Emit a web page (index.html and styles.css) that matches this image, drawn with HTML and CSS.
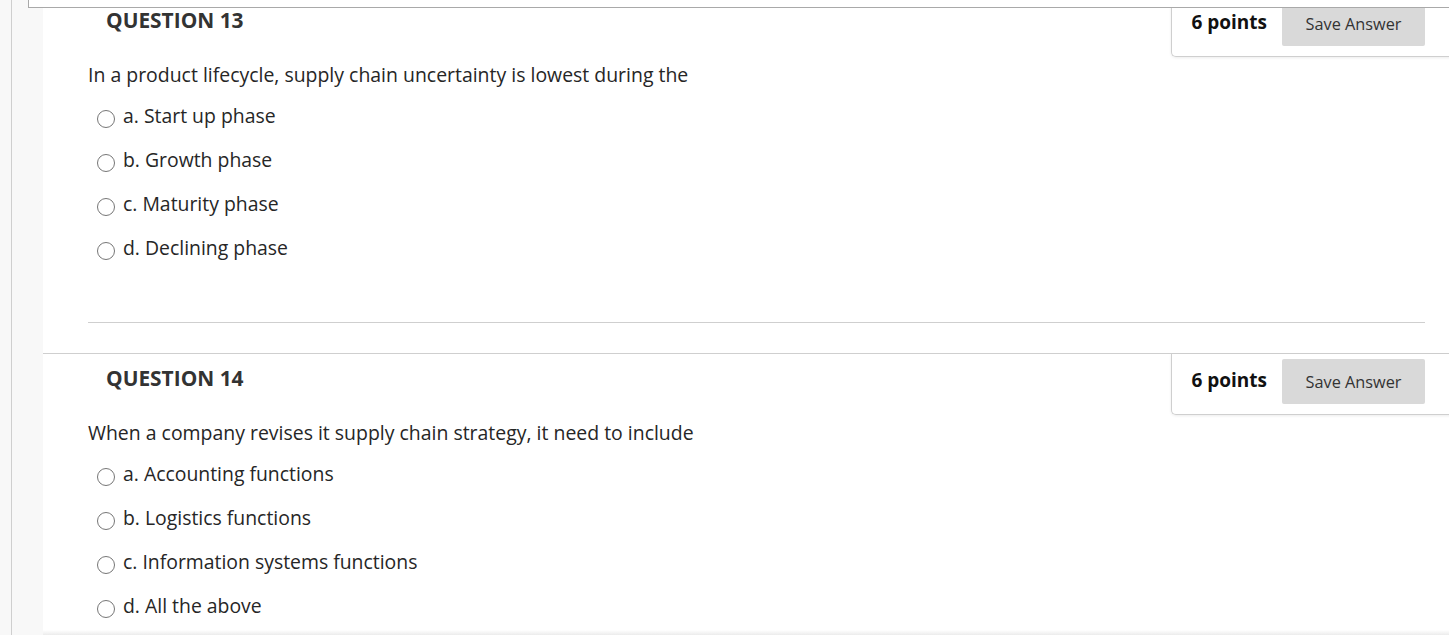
FILE: index.html
```html
<!DOCTYPE html>
<html lang="en">
<head>
<meta charset="utf-8">
<title>Quiz</title>
<link rel="stylesheet" href="styles.css">
</head>
<body>
<div class="page">
  <div class="rail"></div>
  <main class="content">
    <div class="topbar"></div>
    <section class="question first">
      <div class="q-head">
        <h2 class="q-title">QUESTION 13</h2>
        <div class="points-box">
          <span class="points">6 points</span>
          <button class="save">Save Answer</button>
        </div>
      </div>
      <p class="q-text">In a product lifecycle, supply chain uncertainty is lowest during the</p>
      <ul class="options">
        <li class="option"><span class="radio"></span><span class="label">a. Start up phase</span></li>
        <li class="option"><span class="radio"></span><span class="label">b. Growth phase</span></li>
        <li class="option"><span class="radio"></span><span class="label">c. Maturity phase</span></li>
        <li class="option"><span class="radio"></span><span class="label">d. Declining phase</span></li>
      </ul>
      <hr class="sep">
    </section>
    <section class="question">
      <div class="q-head">
        <h2 class="q-title">QUESTION 14</h2>
        <div class="points-box">
          <span class="points">6 points</span>
          <button class="save">Save Answer</button>
        </div>
      </div>
      <p class="q-text">When a company revises it supply chain strategy, it need to include</p>
      <ul class="options">
        <li class="option"><span class="radio"></span><span class="label">a. Accounting functions</span></li>
        <li class="option"><span class="radio"></span><span class="label">b. Logistics functions</span></li>
        <li class="option"><span class="radio"></span><span class="label">c. Information systems functions</span></li>
        <li class="option"><span class="radio"></span><span class="label">d. All the above</span></li>
      </ul>
    </section>
    <div class="bottom-shade"></div>
  </main>
</div>
</body>
</html>
```

FILE: styles.css
```css
html, body {
  margin: 0;
  padding: 0;
}
body {
  background: #f8f8f8;
  font-family: "Open Sans", "Noto Sans", sans-serif;
  color: #262626;
  overflow: hidden;
  height: 635px;
}
.page {
  display: flex;
  min-height: 635px;
}
.rail {
  width: 43px;
  flex: none;
  background: linear-gradient(to right, #f8f8f8 11px, #cfcfcf 11px, #cfcfcf 12px, #f8f8f8 12px);
}
.content {
  flex: 1;
  background: #fff;
  position: relative;
  margin-top: -5px;
}
.topbar {
  position: absolute;
  top: 5px;
  left: -15px;
  right: 0;
  height: 7px;
  background: #fff;
  border-left: 1px solid #a9a9a9;
  border-bottom: 1px solid #a9a9a9;
  z-index: 2;
}
.question {
  border-top: 1px solid #cfcfcf;
}
.q-head {
  display: flex;
  align-items: flex-start;
}
.q-title {
  margin: 10px 0 0 63px;
  font-size: 20.9px;
  line-height: 28px;
  font-weight: 700;
  color: #333;
}
.points-box {
  margin-left: auto;
  margin-right: -4px;
  height: 55px;
  padding: 5px 28px 0 19px;
  border-left: 1px solid #cfcfcf;
  border-bottom: 1px solid #cfcfcf;
  border-bottom-left-radius: 5px;
  box-shadow: 0 1px 3px rgba(0,0,0,0.08);
  display: flex;
  align-items: flex-start;
  gap: 15px;
  box-sizing: content-box;
}
.points {
  font-weight: 700;
  font-size: 19px;
  line-height: 24px;
  color: #111;
  margin-top: 9px;
}
.save {
  width: 143px;
  height: 45px;
  border: none;
  border-radius: 2px;
  background: #d9d9d9;
  color: #333;
  font-family: "Open Sans", "Noto Sans", sans-serif;
  font-size: 16.3px;
  padding: 0;
}
.q-text {
  margin: 6px 0 0 45px;
  font-size: 19.45px;
  line-height: 24px;
}
.options {
  list-style: none;
  margin: 7px 0 0 45px;
  padding: 0;
}
.option {
  display: flex;
  align-items: center;
  height: 44px;
  padding-left: 9px;
}
.radio {
  width: 16px;
  height: 16px;
  border: 1.5px solid #767676;
  border-radius: 50%;
  background: #fff;
  flex: none;
  margin-top: 6px;
}
.label {
  margin-left: 8px;
  font-size: 19.4px;
  line-height: 24px;
}
.sep {
  border: none;
  border-top: 1px solid #cfcfcf;
  margin: 52px 24px 30px 45px;
  height: 0;
}
.bottom-shade {
  height: 6px;
  margin-top: 2px;
  background: linear-gradient(to bottom, #fff, #e8e8e8);
}
```
